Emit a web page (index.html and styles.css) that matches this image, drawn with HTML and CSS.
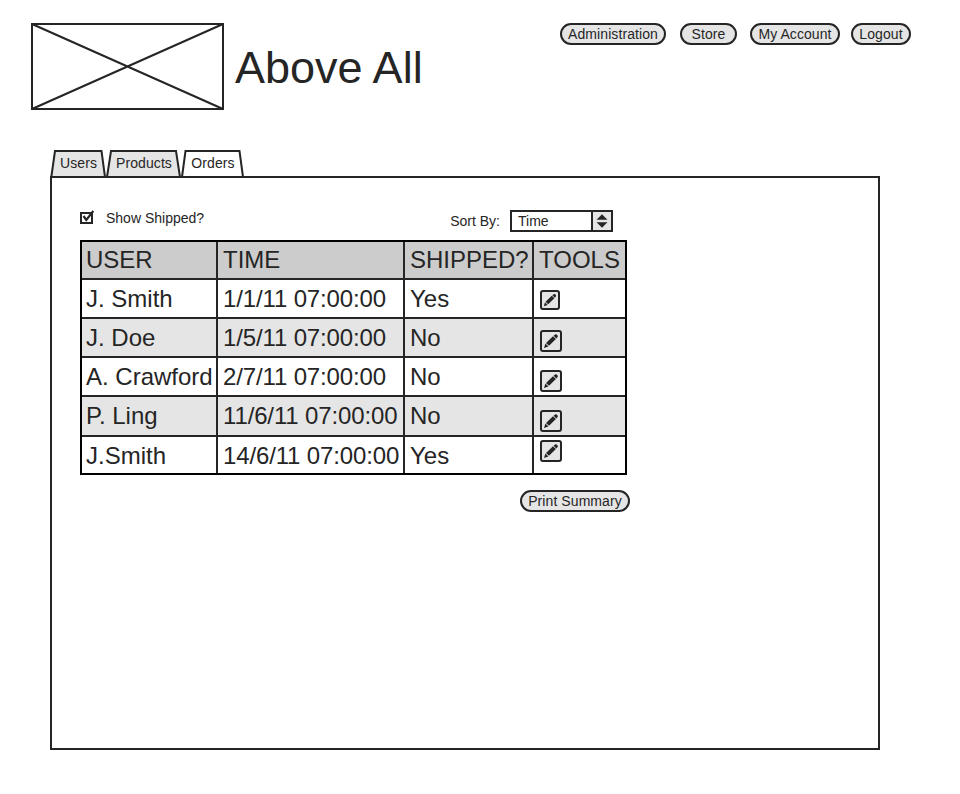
FILE: index.html
```html
<!DOCTYPE html>
<html lang="en">
<head>
<meta charset="utf-8">
<title>Above All</title>
<link rel="stylesheet" href="styles.css">
</head>
<body>
<svg class="defs" width="0" height="0" aria-hidden="true">
  <symbol id="pencil" viewBox="2 2 18 18">
    <path d="M4 18 5.4 13.6 8.4 16.6ZM6 12.9 13 6.3 15.9 9.1 9 15.8ZM13.6 5.7 15.1 4.4Q15.9 3.9 16.7 4.6L17.6 5.5Q18.2 6.3 17.6 7.1L16.4 8.5Z"/>
  </symbol>
</svg>
<header class="header">
  <svg class="logo" width="193" height="87" viewBox="0 0 193 87"><path d="M1 1H192V86H1ZM1 1 192 86M192 1 1 86"/></svg>
  <h1 class="title">Above All</h1>
  <nav class="nav">
    <button class="pill admin">Administration</button>
    <button class="pill store">Store</button>
    <button class="pill account">My Account</button>
    <button class="pill logout">Logout</button>
  </nav>
</header>
<main class="main">
  <div class="tabs">
    <div class="tab users"><svg width="56" height="28"><path d="M1.3 27 5 1H51.5L55 27"/></svg><span>Users</span></div>
    <div class="tab products"><svg width="75" height="28"><path d="M1 27 5 1H70L74 27"/></svg><span>Products</span></div>
    <div class="tab orders"><svg width="63" height="28"><path d="M1 27 4.5 1H58.5L62 27"/></svg><span>Orders</span></div>
  </div>
  <section class="panel">
    <div class="content">
      <div class="filters">
        <label class="check"><svg width="15" height="16" viewBox="0 0 15 16"><path class="box" d="M1 4H12V14H1Z"/><path class="tick" d="M3.5 7 6.3 11 13.3 2"/></svg><span>Show Shipped?</span></label>
        <div class="sort"><span>Sort By:</span>
          <div class="select"><span>Time</span><svg width="20" height="18" viewBox="0 0 18 18"><path d="M3.5 7.8 9 2.2 14.5 7.8ZM3.5 10.2H14.5L9 15.8Z"/></svg></div>
        </div>
      </div>
      <div class="table">
        <div class="row head"><div>USER</div><div>TIME</div><div>SHIPPED?</div><div>TOOLS</div></div>
        <div class="row"><div>J. Smith</div><div class="time">1/1/11 07:00:00</div><div>Yes</div><div class="tools"><svg class="edit small"><use href="#pencil"/></svg></div></div>
        <div class="row alt"><div>J. Doe</div><div class="time">1/5/11 07:00:00</div><div>No</div><div class="tools t2"><svg class="edit"><use href="#pencil"/></svg></div></div>
        <div class="row"><div>A. Crawford</div><div class="time">2/7/11 07:00:00</div><div>No</div><div class="tools t3"><svg class="edit"><use href="#pencil"/></svg></div></div>
        <div class="row alt"><div>P. Ling</div><div class="time">11/6/11 07:00:00</div><div>No</div><div class="tools t4"><svg class="edit"><use href="#pencil"/></svg></div></div>
        <div class="row"><div>J.Smith</div><div class="time">14/6/11 07:00:00</div><div>Yes</div><div class="tools t5"><svg class="edit"><use href="#pencil"/></svg></div></div>
      </div>
      <button class="pill print">Print Summary</button>
    </div>
  </section>
</main>
</body>
</html>
```
FILE: styles.css
```css
* { box-sizing: border-box; }
body {
  margin: 0;
  background: #fff;
  color: #252525;
  font: 14px/18px "Liberation Sans", Arial, sans-serif;
}
svg { display: block; flex: none; }
.defs { position: absolute; }
.header { display: flex; height: 150px; padding: 23px 49px 0 31px; }
.logo { fill: #fff; stroke: #252525; stroke-width: 2; }
.title { margin: 19px 0 0 11px; font-size: 45px; line-height: 52px; font-weight: 400; height: 52px; white-space: nowrap; }
.nav { display: flex; margin-left: auto; }
.pill {
  height: 22px;
  padding: 0;
  border: 2px solid #252525;
  border-radius: 11px;
  background: #e5e5e5;
  color: #252525;
  font: 14px/18px "Liberation Sans", Arial, sans-serif;
  letter-spacing: 0.08px;
  text-align: center;
  white-space: nowrap;
}
.admin { width: 106px; margin-right: 14px; }
.store { width: 57px; margin-right: 13px; }
.account { width: 90px; margin-right: 11px; }
.logout { width: 60px; }
.main { width: 830px; margin-left: 50px; }
.tabs { display: flex; gap: 1px; height: 26px; }
.tab { display: grid; height: 28px; }
.tab svg, .tab span { grid-area: 1 / 1; }
.tab svg { fill: #e5e5e5; stroke: #252525; stroke-width: 2; }
.tab span { z-index: 1; padding: 4px 0 0 1px; text-align: center; letter-spacing: 0.08px; }
.users { width: 56px; }
.products { width: 75px; margin-left: -1px; }
.orders { width: 63px; margin-left: -1px; }
.tab.orders svg { fill: #fff; }
.panel { position: relative; height: 574px; padding: 32px 28px 0; border: 2px solid #252525; }
.content { display: flex; flex-direction: column; width: 550px; }
.filters { display: flex; justify-content: space-between; height: 30px; padding-right: 17px; }
.check { display: flex; height: 18px; margin-top: -1px; gap: 11px; }
.box { fill: #fff; stroke: #252525; stroke-width: 2; }
.tick { fill: none; stroke: #252525; stroke-width: 2.2; }
.sort { display: flex; gap: 10px; line-height: 22px; }
.select { display: flex; justify-content: space-between; width: 103px; height: 22px; padding-left: 6px; border: 2px solid #252525; line-height: 18px; }
.select svg { width: 20px; border-left: 2px solid #252525; background: #e5e5e5; fill: #252525; }
.table {
  display: grid;
  grid-template-rows: 36px 37px 37px 37px 38px 36px;
  gap: 2px;
  width: 547px;
  border: 2px solid #000;
  background: #252525;
  font-size: 24px;
  line-height: 38px;
}
.row { display: grid; grid-template-columns: 134px 185px 127px 91px; grid-template-rows: 100%; gap: 2px; }
.row > div { min-height: 0; overflow: hidden; padding-left: 4px; background: #fff; white-space: nowrap; }
.row > div + div { padding-left: 5px; }
.row > .time { letter-spacing: -0.14px; }
.row.head > div { line-height: 36px; background: #ccc; }
.row.alt > div { background: #e5e5e5; }
.row > .tools { padding: 10px 0 0 6px; }
.edit { width: 22px; height: 22px; border: 2px solid #252525; border-radius: 3px; background: #e5e5e5; fill: #252525; }
.edit.small { width: 20px; height: 20px; }
.row > .t2 { padding-top: 11px; }
.row > .t3 { padding-top: 12px; }
.row > .t4 { padding-top: 13px; }
.row > .t5 { padding-top: 3px; }
.print { width: 110px; margin: 15px 0 0 auto; }
```
